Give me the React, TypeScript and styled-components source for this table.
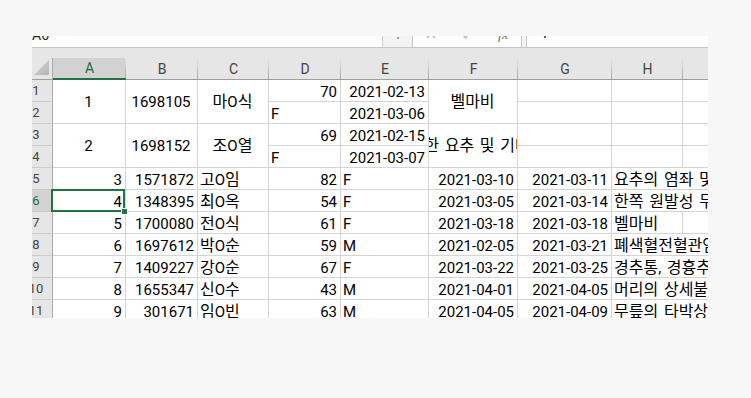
import styled, { createGlobalStyle } from "styled-components";

type Row = {
  no: number;
  id: string;
  name: string;
  age: number;
  sex: string;
  from: string;
  to: string;
  dx: string;
  wide?: boolean;
};

const rows: Row[] = [
  { no: 3, id: "1571872", name: "고O임", age: 82, sex: "F", from: "2021-03-10", to: "2021-03-11", dx: "요추의 염좌 및 긴장", wide: true },
  { no: 4, id: "1348395", name: "최O옥", age: 54, sex: "F", from: "2021-03-05", to: "2021-03-14", dx: "한쪽 원발성 무릎관절증", wide: true },
  { no: 5, id: "1700080", name: "전O식", age: 61, sex: "F", from: "2021-03-18", to: "2021-03-18", dx: "벨마비" },
  { no: 6, id: "1697612", name: "박O순", age: 59, sex: "M", from: "2021-02-05", to: "2021-03-21", dx: "폐색혈전혈관염[버거병]", wide: true },
  { no: 7, id: "1409227", name: "강O순", age: 67, sex: "F", from: "2021-03-22", to: "2021-03-25", dx: "경추통, 경흉추부", wide: true },
  { no: 8, id: "1655347", name: "신O수", age: 43, sex: "M", from: "2021-04-01", to: "2021-04-05", dx: "머리의 상세불명 부위", wide: true },
  { no: 9, id: "301671", name: "임O빈", age: 63, sex: "M", from: "2021-04-05", to: "2021-04-09", dx: "무릎의 타박상", wide: true },
];

const letters = ["A", "B", "C", "D", "E", "F", "G", "H", "I"];

// hangul runs get their own size so they keep Excel's wider glyphs
const Text = ({ children }: { children: string }) => (
  <Line>
    {children.split(/([가-힣]+)/).map((part, i) =>
      /[가-힣]/.test(part) ? <Ko key={i}>{part}</Ko> : part
    )}
  </Line>
);

const App = () => {
  return (
    <>
      <GlobalStyle />
      <Frame>
        <Window>
          <FormulaBar>
            <NameBox>A6</NameBox>
            <Splitter>
              <Dot />
              <Dot />
              <Dot />
            </Splitter>
            <Buttons>
              <svg width="10" height="10" viewBox="0 0 10 10">
                <path d="M1 1 L9 9 M9 1 L1 9" stroke="#b0b0b0" strokeWidth="1.2" fill="none" />
              </svg>
              <svg width="12" height="10" viewBox="0 0 12 10">
                <path d="M1 5 L4.5 9 L11 1" stroke="#b0b0b0" strokeWidth="1.2" fill="none" />
              </svg>
              <Fx>fx</Fx>
            </Buttons>
            <Gap />
            <Input>4</Input>
          </FormulaBar>
          <Strip />
          <Sheet>
            <Corner>
              <svg width="15" height="15" viewBox="0 0 15 15">
                <defs>
                  <linearGradient id="cg" x1="0" y1="0" x2="1" y2="1">
                    <stop offset="0" stopColor="#d6d6d6" />
                    <stop offset="1" stopColor="#b5b5b5" />
                  </linearGradient>
                </defs>
                <polygon points="0,15 15,15 15,0" fill="url(#cg)" />
              </svg>
            </Corner>
            {letters.map((l) => (
              <ColHead key={l} $active={l === "A"}>
                {l === "I" ? "" : l}
              </ColHead>
            ))}

            <RowHead>1</RowHead>
            <Cell $rows={2} $v="center" $h="center">1</Cell>
            <Cell $rows={2} $v="center" $h="center">1698105</Cell>
            <Cell $rows={2} $v="center" $h="center"><Text>마O식</Text></Cell>
            <Cell $h="flex-end">70</Cell>
            <Cell $h="flex-end">2021-02-13</Cell>
            <Cell $rows={2} $v="center" $h="center"><Text>벨마비</Text></Cell>
            <Cell />
            <Cell />
            <Cell />

            <RowHead>2</RowHead>
            <Cell>F</Cell>
            <Cell $h="flex-end">2021-03-06</Cell>
            <Cell />
            <Cell />
            <Cell />

            <RowHead>3</RowHead>
            <Cell $rows={2} $v="center" $h="center">2</Cell>
            <Cell $rows={2} $v="center" $h="center">1698152</Cell>
            <Cell $rows={2} $v="center" $h="center"><Text>조O열</Text></Cell>
            <Cell $h="flex-end">69</Cell>
            <Cell $h="flex-end">2021-02-15</Cell>
            <Cell $rows={2} $v="center" $h="center">
              <Text>{"긴장에 의한 요추 및 기타 부위의\u00a0"}</Text>
            </Cell>
            <Cell />
            <Cell />
            <Cell />

            <RowHead>4</RowHead>
            <Cell>F</Cell>
            <Cell $h="flex-end">2021-03-07</Cell>
            <Cell />
            <Cell />
            <Cell />

            {rows.map((r, i) => {
              const n = i + 5;
              const selected = n === 6;
              return [
                <RowHead key={`rh${n}`} $active={selected}>
                  {n}
                </RowHead>,
                <Cell key={`a${n}`} $h="flex-end" $selected={selected}>
                  {r.no}
                  {selected && (
                    <Selection>
                      <Handle />
                    </Selection>
                  )}
                </Cell>,
                <Cell key={`b${n}`} $h="flex-end">{r.id}</Cell>,
                <Cell key={`c${n}`}><Text>{r.name}</Text></Cell>,
                <Cell key={`d${n}`} $h="flex-end">{r.age}</Cell>,
                <Cell key={`e${n}`}>{r.sex}</Cell>,
                <Cell key={`f${n}`} $h="flex-end">{r.from}</Cell>,
                <Cell key={`g${n}`} $h="flex-end">{r.to}</Cell>,
                r.wide ? (
                  <Cell key={`h${n}`} $cols={2}><Text>{r.dx}</Text></Cell>
                ) : (
                  [<Cell key={`h${n}`}><Text>{r.dx}</Text></Cell>, <Cell key={`i${n}`} />]
                ),
              ];
            })}
          </Sheet>
        </Window>
      </Frame>
    </>
  );
};

const GlobalStyle = createGlobalStyle`
  html, body {
    margin: 0;
    background: #f7f7f7;
  }

  body {
    font-family: Roboto, "Noto Sans CJK KR", sans-serif;
  }
`;

const Frame = styled.div`
  margin: 36px 0 0 32px;
  width: 676px;
  height: 282px;
  overflow: hidden;
  background: #e6e6e6;
`;

// the visible area is a crop of a larger Excel window
const Window = styled.div`
  margin: -12px 0 0 -12px;
  width: 760px;
  display: flex;
  flex-direction: column;
`;

const FormulaBar = styled.div`
  display: flex;
  height: 24px;
  box-sizing: border-box;
  border-bottom: 1px solid #c6c6c6;
  background: #f3f3f3;
`;

const NameBox = styled.div`
  width: 362px;
  box-sizing: border-box;
  padding: 1px 0 0 12px;
  background: #fff;
  color: #222;
  font-size: 14px;
  line-height: 20px;
`;

const Splitter = styled.div`
  width: 30px;
  box-sizing: border-box;
  border-left: 1px solid #d0d0d0;
  display: flex;
  flex-direction: column;
  align-items: center;
  justify-content: center;
  gap: 2px;
  padding-bottom: 3px;
`;

const Dot = styled.span`
  width: 2px;
  height: 2px;
  background: #a0a0a0;
`;

const Buttons = styled.div`
  width: 110px;
  box-sizing: border-box;
  background: #fff;
  border-left: 1px solid #c6c6c6;
  border-right: 1px solid #c6c6c6;
  display: flex;
  align-items: center;
  padding: 0 0 4px 13px;
  gap: 25px;
`;

const Fx = styled.span`
  font-family: "Liberation Serif", serif;
  font-style: italic;
  font-size: 14px;
  color: #6a6a6a;
  margin-top: 2px;
`;

const Gap = styled.div`
  width: 4px;
`;

const Input = styled.div`
  flex: 1;
  background: #fff;
  border-left: 1px solid #c6c6c6;
  padding: 0 0 0 12px;
  font-size: 15px;
  line-height: 18px;
  color: #111;
`;

const Strip = styled.div`
  height: 10px;
  background: #e6e6e6;
`;

const Sheet = styled.div`
  display: grid;
  grid-template-columns: 33px 73px 72px 71px 72px 88px 89px 94px 71px 80px;
  grid-auto-rows: 22px;
  background: #fff;
`;

const Corner = styled.div`
  background: #e6e6e6;
  border-right: 1px solid #ababab;
  border-bottom: 1px solid #9f9f9f;
  display: flex;
  align-items: flex-end;
  justify-content: flex-end;
  padding: 0 3px 4px 0;
`;

const ColHead = styled.div<{ $active?: boolean }>`
  position: relative;
  box-sizing: border-box;
  background: ${(p) => (p.$active ? "#d2d2d2" : "#e6e6e6")};
  border-bottom: ${(p) => (p.$active ? "2px solid #217346" : "1px solid #9f9f9f")};
  color: ${(p) => (p.$active ? "#1d6b40" : "#444")};
  font-size: 14px;
  display: flex;
  align-items: center;
  justify-content: center;

  &::after {
    content: "";
    position: absolute;
    right: 0;
    top: 0;
    bottom: 0;
    width: 1px;
    background: linear-gradient(#e6e6e6, #a8a8a8);
  }
`;

const RowHead = styled.div<{ $active?: boolean }>`
  box-sizing: border-box;
  background: ${(p) => (p.$active ? "#d2d2d2" : "#e6e6e6")};
  border-right: 1px solid #ababab;
  border-bottom: 1px solid #cacaca;
  color: ${(p) => (p.$active ? "#1d6b40" : "#444")};
  font-size: 13px;
  display: flex;
  align-items: center;
  justify-content: center;
`;

const Cell = styled.div<{
  $rows?: number;
  $cols?: number;
  $v?: string;
  $h?: string;
  $selected?: boolean;
}>`
  position: ${(p) => (p.$selected ? "relative" : "static")};
  grid-row: span ${(p) => p.$rows ?? 1};
  grid-column: span ${(p) => p.$cols ?? 1};
  box-sizing: border-box;
  border-right: 1px solid #d4d4d4;
  border-bottom: 1px solid #d4d4d4;
  display: flex;
  align-items: ${(p) => p.$v ?? "flex-end"};
  justify-content: ${(p) => p.$h ?? "flex-start"};
  padding: 0 3px 0 2px;
  font-size: 15px;
  line-height: 18px;
  color: #000;
  white-space: nowrap;
  overflow: ${(p) => (p.$selected ? "visible" : "hidden")};
`;

const Line = styled.span`
  flex: none;
  white-space: pre;
  word-spacing: 2px;
`;

const Ko = styled.span`
  font-size: 16px;
  line-height: 18px;
`;

const Selection = styled.div`
  position: absolute;
  left: -2px;
  right: 0;
  top: -1px;
  bottom: -1px;
  border: 2px solid #217346;
  pointer-events: none;
`;

const Handle = styled.span`
  position: absolute;
  right: -5px;
  bottom: -5px;
  width: 5px;
  height: 5px;
  background: #217346;
  border: 1px solid #fff;
`;

export default App;
